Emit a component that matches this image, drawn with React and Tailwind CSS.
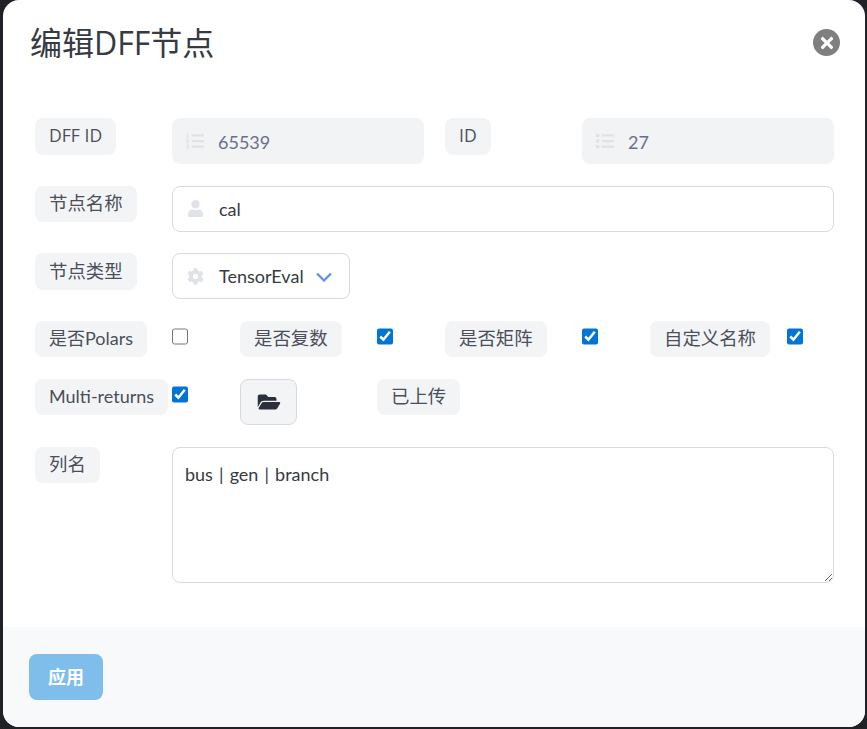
import React from 'react'
import { FaCog, FaFolderOpen, FaList, FaListOl, FaTimes, FaUser } from 'react-icons/fa'

const font = { fontFamily: 'Lato, "Noto Sans CJK SC", sans-serif' }
const openSans = { fontFamily: '"Open Sans", "Noto Sans CJK SC", sans-serif' }

// size + nudge differ between the latin and the chinese labels
const Tag = ({ children, className = 'pb-[3px] text-lg', style }) => (
  <span
    style={style}
    className={`inline-flex h-[36.5px] items-center justify-center justify-self-start whitespace-nowrap rounded-lg bg-[#f3f4f6] px-[14px] text-[#4a4f5a] ${className}`}
  >
    {children}
  </span>
)

const CnTag = ({ children }) => <Tag className="text-[18.4px]">{children}</Tag>

const Check = ({ checked }) => (
  <input
    type="checkbox"
    defaultChecked={checked}
    className="mt-[7px] h-[17px] w-[16px] justify-self-start accent-[#0075d4]"
  />
)

const IconBox = ({ icon: Icon, className }) => (
  <span className="absolute left-[14px] top-[14px] flex h-[18px] w-[18px] items-center justify-center text-[#dfe2e7]">
    <Icon className={className} />
  </span>
)

const IconInput = ({ icon, iconClass, value, disabled, className }) => (
  <div className={`relative h-[46px] ${className}`}>
    <IconBox icon={icon} className={iconClass} />
    <input
      readOnly
      value={value}
      className={
        disabled
          ? 'h-full w-full rounded-lg bg-[#f2f3f5] pl-[46px] pt-[2px] text-lg text-[#68708c] outline-none'
          : 'h-full w-full rounded-lg border border-[#d8d9e0] bg-white pl-[46px] text-lg text-[#363a42] outline-none'
      }
    />
  </div>
)

export default function App() {
  return (
    <div className="h-[729px] overflow-hidden bg-[#1f2127] pl-[3px] pr-[2px]" style={font}>
      <div className="flex h-[727px] flex-col overflow-hidden rounded-2xl bg-white">
        <header className="flex h-[118px] items-start justify-between pl-[27px] pr-[25px] pt-[19px]">
          <h1 className="text-[32px] leading-[48px] text-[#363a42]" style={openSans}>编辑DFF节点</h1>
          <button className="mt-[10px] flex h-[27px] w-[27px] items-center justify-center rounded-full bg-[#7f7f7f] text-white">
            <FaTimes className="h-[18px] w-[18px]" />
          </button>
        </header>

        <div className="flex flex-1 flex-col gap-[21.6px] pl-[32px] pr-[31px]">
          <div className="grid grid-cols-[137px_273px_137px_252px]">
            <Tag className="pb-[3px] text-[17.6px]" style={openSans}>DFF ID</Tag>
            <IconInput icon={FaListOl} iconClass="h-[18px] w-[18px]" value="65539" disabled className="w-[252px]" />
            <Tag className="pb-[3px] text-[17.6px]" style={openSans}>ID</Tag>
            <IconInput icon={FaList} iconClass="h-[18px] w-[18px]" value="27" disabled />
          </div>

          <div className="grid grid-cols-[137px_1fr]">
            <CnTag>节点名称</CnTag>
            <IconInput icon={FaUser} iconClass="h-[17px] w-[15px]" value="cal" />
          </div>

          <div className="grid grid-cols-[137px_1fr]">
            <CnTag>节点类型</CnTag>
            <div className="relative h-[46px] w-[178px]">
              <IconBox icon={FaCog} className="h-[17px] w-[17px]" />
              <select className="h-full w-full appearance-none rounded-lg border border-[#d8d9e0] bg-white pl-[46px] text-lg text-[#363a42] outline-none">
                <option>TensorEval</option>
              </select>
              <svg className="absolute right-[18px] top-[19px] h-[10px] w-4 text-[#5b8def]" viewBox="0 0 16 10" fill="none" stroke="currentColor" strokeWidth="2.2">
                <path d="M1 1.5l7 7 7-7" />
              </svg>
            </div>
          </div>

          <div className="grid h-[36.6px] grid-cols-[137px_68px_137px_68px_137px_68px_137px_47px]">
            <Tag>是否Polars</Tag>
            <Check />
            <CnTag>是否复数</CnTag>
            <Check checked />
            <CnTag>是否矩阵</CnTag>
            <Check checked />
            <CnTag>自定义名称</CnTag>
            <Check checked />
          </div>

          <div className="grid grid-cols-[137px_68px_137px_1fr]">
            <Tag>Multi-returns</Tag>
            <Check checked />
            <button className="flex h-[46px] w-[57px] items-center justify-center rounded-lg border border-[#d8d9e0] bg-[#f3f4f6] text-[#2b303b]">
              <FaFolderOpen className="h-[20px] w-[24px]" />
            </button>
            <CnTag>已上传</CnTag>
          </div>

          <div className="grid grid-cols-[137px_1fr]">
            <CnTag>列名</CnTag>
            <textarea
              readOnly
              value="bus | gen | branch"
              className="h-[136px] w-full rounded-lg border border-[#d8d9e0] bg-white px-3 pt-[12px] text-lg text-[#363a42] outline-none [word-spacing:1.5px]"
            />
          </div>
        </div>

        <footer className="flex h-[100px] items-start bg-[#f8f9fb] pl-[26px] pt-[27px]">
          <button className="h-[46px] w-[74px] rounded-lg bg-[#7fbdea] text-lg font-bold text-white">应用</button>
        </footer>
      </div>
    </div>
  )
}
